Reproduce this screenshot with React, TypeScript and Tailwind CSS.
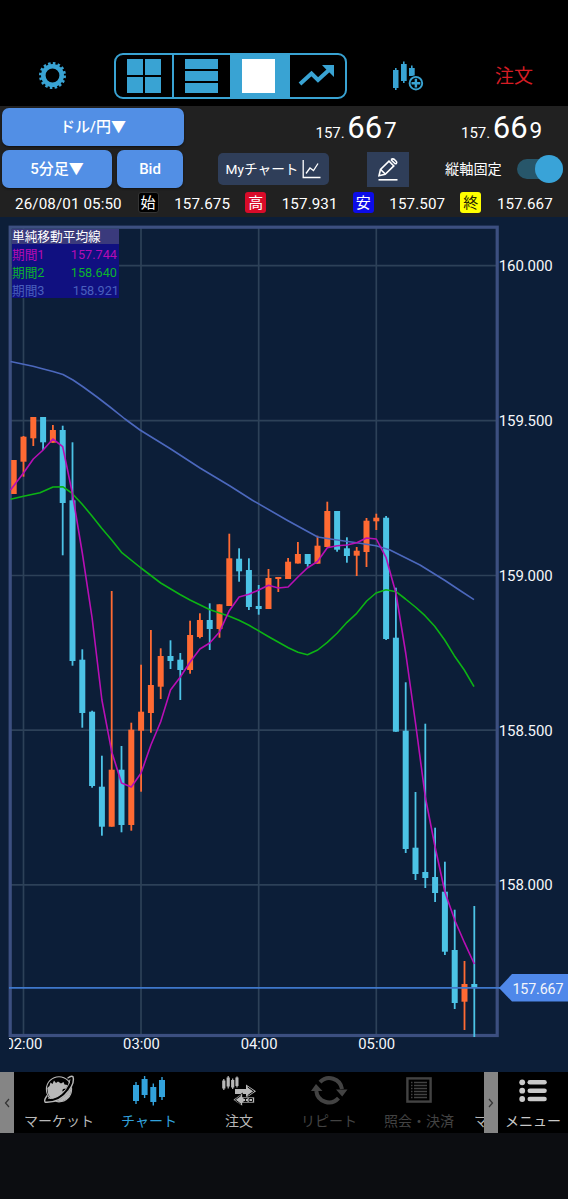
import React from "react";

const UP = "#ff6a33";
const DOWN = "#4cc3e6";
const ACCENT = "#39a3d3";

const X0 = 23.5;
const STEP = 9.8;

// [high, bodyTop, bodyBottom, low, rising]
type Candle = [number, number, number, number, 0 | 1];

const candles: Candle[] = [
  [460, 460, 494, 494, 1],
  [436, 436.7, 461.7, 476.7, 1],
  [417, 417, 438.3, 446, 1],
  [417, 417, 442.3, 450, 0],
  [425, 430, 442.7, 442.7, 1],
  [425.7, 430, 503, 555.3, 0],
  [442.3, 500.3, 661, 665.7, 0],
  [649.3, 659.7, 713, 727.7, 0],
  [710.7, 711.7, 786, 787.7, 0],
  [755.7, 786.7, 826.7, 835.7, 0],
  [591, 769.7, 826.7, 826.7, 1],
  [746, 769.7, 825, 832.3, 0],
  [722.7, 729.7, 825, 830.7, 1],
  [664.7, 711.7, 730.7, 791.7, 1],
  [630, 685, 713, 732.7, 1],
  [648.3, 656, 686.7, 699, 1],
  [640.3, 656, 661, 669, 0],
  [653, 659.7, 670, 700, 0],
  [620.7, 635, 670, 673.7, 1],
  [613.3, 620, 637, 638.3, 1],
  [603.3, 620, 629, 650, 0],
  [604.3, 604.3, 629, 637.7, 1],
  [533.7, 558.3, 606, 606, 1],
  [548.3, 558.7, 571.3, 581.7, 0],
  [558.3, 570, 607, 610, 0],
  [585, 606, 609, 614.7, 0],
  [569, 578, 609, 609, 1],
  [577, 577, 579, 592, 1],
  [558, 561.7, 579, 579, 1],
  [542, 554, 563.5, 563.5, 1],
  [554, 554, 564, 566.7, 0],
  [535.7, 545.7, 563.7, 563.7, 1],
  [501.7, 511, 547, 547, 1],
  [511, 511, 549.7, 551.7, 0],
  [537.3, 548.3, 556, 562.7, 0],
  [547, 550.7, 555.7, 576, 1],
  [518, 520.7, 552, 567, 1],
  [513.7, 517.7, 521.3, 530, 1],
  [516, 517.7, 639, 640, 0],
  [587.7, 637.7, 731.7, 731.7, 0],
  [682.3, 730.7, 849, 853, 0],
  [792, 847.7, 874, 880, 0],
  [723.7, 872, 878, 888, 0],
  [827.7, 877, 893, 902, 0],
  [861.7, 891.7, 951.7, 955, 0],
  [909.7, 950, 1003, 1009, 0],
  [961, 984, 1001.7, 1030, 1],
  [906, 984, 988, 1037, 0],
];

const sma1 = [
  473, 459, 450, 439, 446.7, 494, 553, 618, 700, 751.7, 783, 787, 773, 745, 721.7, 690, 677, 662, 649,
  643, 632, 610.7, 597, 594.3, 590, 585.3, 588, 587, 577, 567.7, 561.5, 547.7, 545.7, 545, 542.7, 538,
  539, 557.7, 593, 653, 723, 797, 847, 892, 920, 942.7, 964,
];
const sma1Points = "10.5,490 " + sma1.map((y, i) => `${(X0 + STEP * i).toFixed(1)},${y}`).join(" ");

const sma2Points =
  "10.5,499.3 23.5,496.3 40,492.7 53,487 62.7,486.7 71.7,493 82,504 92,516 101.7,528.3 111.7,540 121.5,552.3 141,568 160.7,583 180,594.5 190,600 210,609.7 229.3,616.3 239,620.3 249,625.3 268.7,636.7 288.3,647.7 298,652.3 307.5,654.7 317.7,650 327.3,642.3 337.3,633 347,622.3 356.7,613.3 366.7,601 376,593 386,589.7 396,591.7 405.5,599 416,607.5 425,615.7 434.7,626.3 444.7,640 454.3,655.7 464.3,670 474,686.7";
const sma3Points =
  "10.5,361.5 23.5,364.3 33,366.3 43.3,369 53,371.5 63,374.5 73,380 83.3,387 97,397 110,407 125,419 140,430 170,448.5 200,468 230,486 252,500 288,520.7 317.7,537 337,540 356.7,542.7 376,545.7 390,550 405,557.5 420,565 445,580.5 460,590.5 474,599.7";

function PriceChart() {
  return (
    <svg viewBox="0 217 568 855" width="568" height="855" className="block bg-[#0c1e38] font-['Roboto','Noto_Sans_CJK_JP',sans-serif]">
      <defs>
        <clipPath id="plot"><rect x="9" y="226" width="490" height="812" /></clipPath>
        <clipPath id="axis"><rect x="9" y="1030" width="559" height="40" /></clipPath>
      </defs>
      <g stroke="#2d4158" strokeWidth="1.7">
        {[265.7, 420.7, 575.5, 730.2, 884.8].map((y) => <line key={y} x1="11" x2="496" y1={y} y2={y} />)}
        {[23.5, 141, 258.7, 376.3].map((x) => <line key={x} x1={x} x2={x} y1="228" y2="1035" />)}
      </g>
      <rect x="10.2" y="227.2" width="487" height="808.3" fill="none" stroke="#3c4f80" strokeWidth="3.2" />
      <g clipPath="url(#plot)">
        {candles.map(([hi, top, bottom, lo, up], i) => {
          const x = X0 + STEP * (i - 1);
          const left = Math.max(x - 3, 11.2);
          return (
            <g key={i} fill={up ? UP : DOWN}>
              <rect x={x - 0.9} y={hi} width="1.8" height={lo - hi} />
              <rect x={left} y={top} width={x + 3 - left} height={bottom - top} />
            </g>
          );
        })}
        <g fill="none" strokeWidth="1.6" strokeLinejoin="round">
          <polyline points={sma3Points} stroke="#4c68bd" />
          <polyline points={sma2Points} stroke="#0cb414" />
          <polyline points={sma1Points} stroke="#b80fb5" />
        </g>
      </g>
      <line x1="9" x2="502" y1="987.8" y2="987.8" stroke="#3f78cc" strokeWidth="1.7" />
      <path d="M499 988L512 974H568V1001.5H512Z" fill="#4f88ea" />
      <g fill="#f4f6fa" fontSize="15">
        {["160.000", "159.500", "159.000", "158.500", "158.000"].map((t, i) => (
          <text key={t} x="498.7" y={271.2 + i * 154.8} textLength="54" lengthAdjust="spacing">{t}</text>
        ))}
        <text x="512.5" y="993.5" fontSize="14.3" textLength="51">157.667</text>
        <g clipPath="url(#axis)">
          {["02:00", "03:00", "04:00", "05:00"].map((t, i) => (
            <text key={t} x={23.9 + i * 117.6} y="1049.3" textAnchor="middle" fontSize="14.8">{t}</text>
          ))}
        </g>
      </g>
    </svg>
  );
}

function Legend() {
  const rows = [
    { name: "期間1", value: "157.744", style: "text-[#b40cb4] pr-[2px]" },
    { name: "期間2", value: "158.640", style: "text-[#0cb42c] pr-[2px]" },
    { name: "期間3", value: "158.921", style: "text-[#4a60bd]" },
  ];
  return (
    <div className="absolute left-[12px] top-[12px] w-[107px] bg-[#101080]">
      <div className="h-[15px] whitespace-nowrap bg-[#3a3a7c] text-[12.7px] leading-[15px] text-white">単純移動平均線</div>
      {rows.map((r) => (
        <div key={r.name} className={"flex h-[18px] items-center justify-between pt-[3px] leading-[15px] " + r.style}>
          <span className="text-[12.7px]">{r.name}</span>
          <span className="text-[12.7px]">{r.value}</span>
        </div>
      ))}
    </div>
  );
}

function Toolbar() {
  return (
    <div className="flex h-[61px] items-center bg-black">
      <svg className="ml-[38px]" width="29" height="29" viewBox="-14.5 -14.5 29 29" fill="none" stroke={ACCENT}>
        <circle r="9.2" strokeWidth="4.6" />
        <circle r="12" strokeWidth="3" strokeDasharray="2.5 2.212" />
      </svg>
      <div className="ml-[47px] flex h-[46px] w-[233px] overflow-hidden rounded-[9px] border-2 border-[#39a3d3]">
        <div className="grid w-[58px] grid-cols-[16px_16px] content-center gap-[2px] border-r-2 border-[#39a3d3] pl-[11px]">
          {[0, 1, 2, 3].map((i) => <div key={i} className="h-[16px] bg-[#39a3d3]" />)}
        </div>
        <div className="flex w-[56px] flex-col justify-center gap-[2px] pl-[11px]">
          {[0, 1, 2].map((i) => <div key={i} className="h-[10px] w-[33px] bg-[#39a3d3]" />)}
        </div>
        <div className="flex w-[60px] items-center bg-[#39a3d3] pl-[12px]">
          <div className="h-[34px] w-[33px] bg-white" />
        </div>
        <svg className="ml-[8px] mt-[9px]" width="37" height="24" viewBox="0 0 37 24" fill="none" stroke={ACCENT} strokeWidth="4">
          <path d="M2 20L13.5 9.5L20 16L32 5" />
          <path d="M24 1H36V13L32.5 9.5L27.5 4.8Z" fill={ACCENT} stroke="none" />
        </svg>
      </div>
      <svg className="ml-[45px]" width="32" height="32" viewBox="0 0 32 32" fill={ACCENT}>
        <path d="M1 10H3V8H4.6V10H6.5V28H4.6V30H3V28H1ZM9 4H11V1.5H12.6V4H14.7V21H12.6V23H11V21H9ZM17 8H19V5.5H20.6V8H22.7V16H17Z" />
        <circle cx="23.9" cy="23.2" r="8" fill="#000" />
        <circle cx="23.9" cy="23.2" r="6.3" fill="none" stroke={ACCENT} strokeWidth="1.9" />
        <path d="M23.9 18.8V27.6M19.5 23.2H28.3" stroke={ACCENT} strokeWidth="2.4" />
      </svg>
      <div className="ml-[71px] pt-[2px] text-[19px] leading-[24px] text-[#d51c24]">注文</div>
    </div>
  );
}

function Price({ big, small }: { big: string; small: string }) {
  return (
    <div className="flex h-full w-[145.5px] shrink-0 items-baseline leading-[40px] text-white">
      <span className="text-[15px]">157.</span>
      <span className="ml-[2.5px] text-[31px]">{big}</span>
      <span className="ml-[2px] text-[22.5px]">{small}</span>
    </div>
  );
}

const ohlc = [
  { label: "始", value: "157.675", badge: "bg-black text-white border border-[#343434]" },
  { label: "高", value: "157.931", badge: "bg-[#d90b29] text-white" },
  { label: "安", value: "157.507", badge: "bg-[#0c0ce8] text-white" },
  { label: "終", value: "157.667", badge: "bg-[#ffff00] text-[#222200]" },
];

function Header() {
  return (
    <div className="h-[111px] bg-[#212121] pt-[2px] text-white">
      <div className="flex h-[39px] pl-[2px]">
        <button className="h-[38px] w-[182px] shrink-0 rounded-[7px] bg-[#528fe5] pt-[1px] text-[15px] font-medium shadow-[0_1px_2px_#111]">ドル/円▼</button>
        <div className="ml-[131.5px] flex"><Price big="66" small="7" /><Price big="66" small="9" /></div>
      </div>
      <div className="mt-[3px] flex h-[38px] items-center pl-[2px]">
        <button className="h-[38px] w-[110px] rounded-[7px] bg-[#528fe5] pt-[1px] text-[15px] font-medium shadow-[0_1px_2px_#111]">5分足▼</button>
        <button className="ml-[5px] h-[38px] w-[66px] rounded-[7px] bg-[#528fe5] pt-[1px] text-[15px] font-medium shadow-[0_1px_2px_#111]">Bid</button>
        <button className="ml-[35px] flex h-[32px] w-[111px] items-center whitespace-nowrap rounded-[5px] bg-[#2f3e59] pl-[7.5px] text-[13.7px]">
          <span className="w-[69px] pt-[1px]">Myチャート</span>
          <svg className="ml-[7.5px]" width="19" height="20" viewBox="0 0 19 20" fill="none" stroke="#fff" strokeWidth="1.3">
            <path d="M1.2 1V18.5H18.5M4 14.5L8 9L11.5 11.5L16 4.5" />
          </svg>
        </button>
        <div className="ml-[38px] flex h-[35px] w-[42px] items-center justify-center bg-[#2f3e59]">
          <svg width="22" height="25" viewBox="0 0 22 25" fill="none" stroke="#fff" strokeWidth="1.6">
            <path d="M2 18.7L3.5 12.5L12 4.2L16.8 8.9L8.2 17.3ZM3.8 12.6L8.2 17M14 2.7Q15.8 1 17.6 2.7L18.9 4Q20.6 5.8 18.6 7.2M14 2.7L18.6 7.2" />
            <path d="M1.5 22.8H20.5" />
          </svg>
        </div>
        <span className="ml-[36px] w-[58px] whitespace-nowrap pt-[2px] text-[14.2px]">縦軸固定</span>
        <div className="ml-[14px] flex h-[28px] w-[46px] items-center">
          <div className="flex h-[20px] w-full items-center justify-end rounded-full bg-[#27566a]">
            <div className="size-[28px] shrink-0 rounded-full bg-[#39a3d8]" />
          </div>
        </div>
      </div>
      <div className="flex h-[29px] items-center whitespace-nowrap pl-[15px] pt-[1px] text-[15.2px] tracking-[0.1px]">
        <span className="w-[124px] pt-[2px]">26/08/01 05:50</span>
        {ohlc.map((o) => (
          <div key={o.label} className="flex w-[107.6px] shrink-0 items-center">
            <span className={"flex size-[21px] items-center justify-center rounded-[3px] text-[15px] leading-[20px] " + o.badge}>{o.label}</span>
            <span className="ml-[15.5px] pt-[2px]">{o.value}</span>
          </div>
        ))}
      </div>
    </div>
  );
}

function GlobeIcon() {
  return (
    <svg width="34" height="32" viewBox="0 0 34 32">
      <circle cx="17" cy="15.3" r="12.6" fill="none" stroke="#b8b8b8" strokeWidth="1.1" />
      <path d="M6.2 20L5.2 14L7.5 12L8.5 8.5L10.5 10L12 6.5L14 9L16 7.5L19 9.5L21.5 8L22.5 10.5L25.5 11L24 14.5L21 15L20 17.5L24.5 15.5L28.8 12.5Q30.5 20.5 24.5 25.3Q18.5 29.5 11.5 26.5Q8 24.5 6.2 20Z" fill="#b8b8b8" />
      <path d="M5 27Q17 27.5 25.5 16.5Q31 9 30.3 3" fill="none" stroke="#000" strokeWidth="3.4" />
      <path d="M5.2 21.5Q1.5 26.5 3.2 28.2Q18 29 27 16.5Q33 7.5 31 2.7Q29.5 1.2 25.5 4.2" fill="none" stroke="#b8b8b8" strokeWidth="1.4" />
      <path d="M6 24.2Q16.5 24.5 23.5 15.5Q27.5 10 28 5.5" fill="none" stroke="#b8b8b8" strokeWidth="1" />
    </svg>
  );
}

function CandlesIcon() {
  return (
    <svg width="34" height="32" viewBox="0 0 34 32" fill="#32a2dc">
      <path d="M1 11H3.3V8H4.7V11H7V27H4.7V30H3.3V27H1ZM9.6 5H11.9V2H13.3V5H15.6V21H13.3V24H11.9V21H9.6ZM18.3 13H20.6V9.5H22V13H24.3V28H22V31.5H20.6V28H18.3ZM27 6H29.3V3H30.7V6H33V23H30.7V26H29.3V23H27Z" />
    </svg>
  );
}

function OrderIcon() {
  return (
    <svg width="36" height="32" viewBox="0 0 36 32" fill="#b8b8b8">
      <path d="M1.2 6.5H2.2V5H3.4V6.5H4.4V14.5H3.4V16H2.2V14.5H1.2ZM5.6 3.5H6.6V2H7.8V3.5H8.8V12.5H7.8V14.5H6.6V12.5H5.6ZM10.1 6H11.1V4.5H12.3V6H13.3V13.5H12.3V15H11.1V13.5H10.1ZM14.4 3.5H15.4V2.5H16.6V3.5H17.5V12H16.6V13.5H15.4V12H14.4Z" />
      <path d="M14 15H25V10.5L35 17.3L25 24V20H14Z" />
      <path d="M26.7 13L32.8 17.3L26.7 21.6" fill="none" stroke="#000" strokeWidth="1" />
      <path d="M12 25.8L21.5 19V23H33.5V29H21.5V32.2Z" stroke="#000" strokeWidth=".7" />
      <path d="M20 21.5L14.3 25.8L20 30.2M22.5 24.5H26.5M22.5 27.5H26.5M24.5 24.5V27.5M28 24.5H31.5V27.5H28Z" fill="none" stroke="#111" strokeWidth="1" />
    </svg>
  );
}

function RepeatIcon() {
  return (
    <svg width="38" height="32" viewBox="0 0 38 32" fill="none" stroke="#434343" strokeWidth="4">
      <path d="M10 8.2A12.8 12.8 0 0 1 32 15" />
      <path d="M28.5 24.2A12.8 12.8 0 0 1 6.3 17" />
      <path d="M1 17L6 10L12.5 17ZM26 15.5H37.5L32.2 22.5Z" fill="#434343" stroke="none" />
    </svg>
  );
}

function ListDocIcon() {
  return (
    <svg width="28" height="32" viewBox="0 0 28 32" fill="none" stroke="#434343">
      <rect x="2.4" y="4.4" width="23.2" height="23.2" strokeWidth="2.4" />
      <path d="M6 8.5H7.5M9 8.5H22M6 11.5H7.5M9 11.5H22M6 14.5H7.5M9 14.5H22M6 17.5H7.5M9 17.5H22M6 20.5H7.5M9 20.5H22M6 23.5H7.5M9 23.5H22" strokeWidth="1.3" />
    </svg>
  );
}

function MenuIcon() {
  return (
    <svg width="28" height="32" viewBox="0 0 28 32" fill="#c9c9c9">
      {[8.3, 16.7, 25].map((y) => (
        <g key={y}>
          <circle cx="3.2" cy={y} r="2.9" />
          <rect x="8.5" y={y - 2.3} width="19.3" height="4.6" rx="2.3" />
        </g>
      ))}
    </svg>
  );
}

const tabs = [
  { label: "マーケット", icon: <GlobeIcon />, color: "text-[#b8b8b8]" },
  { label: "チャート", icon: <CandlesIcon />, color: "text-[#32a2dc]" },
  { label: "注文", icon: <OrderIcon />, color: "text-[#b8b8b8]" },
  { label: "リピート", icon: <RepeatIcon />, color: "text-[#434343]" },
  { label: "照会・決済", icon: <ListDocIcon />, color: "text-[#434343]" },
];

function Tab({ label, icon, color }: { label: string; icon: React.ReactNode; color: string }) {
  return (
    <div className={"flex w-[90px] shrink-0 flex-col items-center " + color}>
      <div className="flex h-[39px] items-start pt-[2px]">{icon}</div>
      <span className="whitespace-nowrap text-[14px] leading-[20px]">{label}</span>
    </div>
  );
}

function Strip({ d }: { d: string }) {
  return (
    <div className="flex h-full w-[14px] shrink-0 items-center justify-center bg-[#858585]">
      <svg width="6" height="10" viewBox="0 0 6 10" fill="none" stroke="#333" strokeWidth="1.2"><path d={d} /></svg>
    </div>
  );
}

function BottomNav() {
  return (
    <nav className="flex h-[61px] bg-black">
      <Strip d="M5 1L1.5 5L5 9" />
      <div className="flex w-[470px] overflow-hidden">
        {tabs.map((t) => <Tab key={t.label} {...t} />)}
        <div className="w-[20px] pl-[10px] pt-[39px] text-[14px] leading-[20px] text-[#b8b8b8]">マ</div>
      </div>
      <Strip d="M1 1L4.5 5L1 9" />
      <div className="flex w-[70px] justify-center overflow-hidden">
        <Tab label="メニュー" icon={<MenuIcon />} color="text-[#c9c9c9]" />
      </div>
    </nav>
  );
}

export default function App() {
  return (
    <div className="flex h-[1199px] w-[568px] flex-col overflow-hidden bg-[#0c0d11] font-['Roboto','Noto_Sans_CJK_JP',sans-serif]">
      <div className="h-[45px] bg-black" />
      <Toolbar />
      <Header />
      <div className="relative h-[855px]">
        <PriceChart />
        <Legend />
      </div>
      <BottomNav />
    </div>
  );
}
